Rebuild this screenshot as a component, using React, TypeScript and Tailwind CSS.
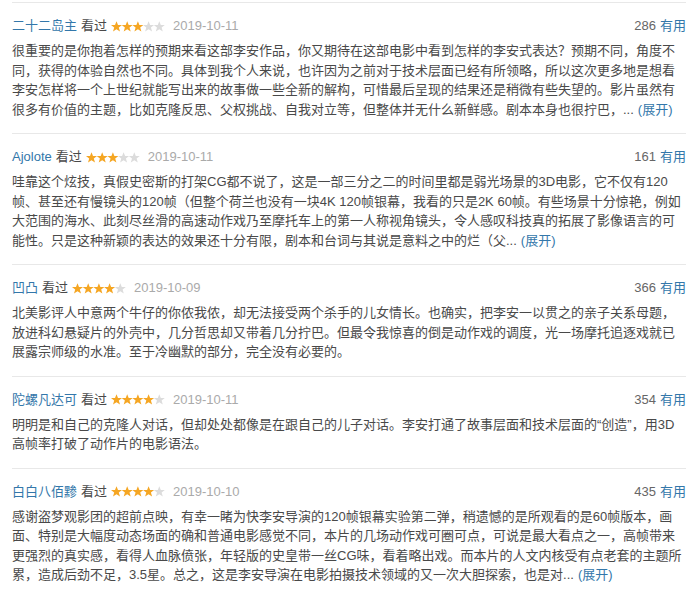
import React from "react";

type Review = {
  user: string;
  stars: number;
  date: string;
  votes: number;
  text: string;
  more: boolean;
};

const reviews: Review[] = [
  {
    user: "二十二岛主",
    stars: 3,
    date: "2019-10-11",
    votes: 286,
    text:
      "很重要的是你抱着怎样的预期来看这部李安作品，你又期待在这部电影中看到怎样的李安式表达？预期不同，角度不同，获得的体验自然也不同。具体到我个人来说，也许因为之前对于技术层面已经有所领略，所以这次更多地是想看李安怎样将一个上世纪就能写出来的故事做一些全新的解构，可惜最后呈现的结果还是稍微有些失望的。影片虽然有很多有价值的主题，比如克隆反思、父权挑战、自我对立等，但整体并无什么新鲜感。剧本本身也很拧巴，...",
    more: true,
  },
  {
    user: "Ajolote",
    stars: 3,
    date: "2019-10-11",
    votes: 161,
    text:
      "哇靠这个炫技，真假史密斯的打架CG都不说了，这是一部三分之二的时间里都是弱光场景的3D电影，它不仅有120帧、甚至还有慢镜头的120帧（但整个荷兰也没有一块4K 120帧银幕，我看的只是2K 60帧。有些场景十分惊艳，例如大范围的海水、此刻尽丝滑的高速动作戏乃至摩托车上的第一人称视角镜头，令人感叹科技真的拓展了影像语言的可能性。只是这种新颖的表达的效果还十分有限，剧本和台词与其说是意料之中的烂（父...",
    more: true,
  },
  {
    user: "凹凸",
    stars: 4,
    date: "2019-10-09",
    votes: 366,
    text:
      "北美影评人中意两个牛仔的你侬我侬，却无法接受两个杀手的儿女情长。也确实，把李安一以贯之的亲子关系母题，放进科幻悬疑片的外壳中，几分哲思却又带着几分拧巴。但最令我惊喜的倒是动作戏的调度，光一场摩托追逐戏就已展露宗师级的水准。至于冷幽默的部分，完全没有必要的。",
    more: false,
  },
  {
    user: "陀螺凡达可",
    stars: 4,
    date: "2019-10-11",
    votes: 354,
    text:
      "明明是和自己的克隆人对话，但却处处都像是在跟自己的儿子对话。李安打通了故事层面和技术层面的“创造”，用3D高帧率打破了动作片的电影语法。",
    more: false,
  },
  {
    user: "白白八佰黪",
    stars: 4,
    date: "2019-10-10",
    votes: 435,
    text:
      "感谢盗梦观影团的超前点映，有幸一睹为快李安导演的120帧银幕实验第二弹，稍遗憾的是所观看的是60帧版本，画面、特别是大幅度动态场面的确和普通电影感觉不同，本片的几场动作戏可圈可点，可说是最大看点之一，高帧带来更强烈的真实感，看得人血脉偾张，年轻版的史皇带一丝CG味，看着略出戏。而本片的人文内核受有点老套的主题所累，造成后劲不足，3.5星。总之，这是李安导演在电影拍摄技术领域的又一次大胆探索，也是对...",
    more: true,
  },
];

function Stars({ n }: { n: number }) {
  const star =
    "M5.5 0.2 L7 4 L11 4.1 L7.8 6.6 L9 10.6 L5.5 8.2 L2 10.6 L3.2 6.6 L0 4.1 L4 4 Z";
  return (
    <svg width="55" height="11" viewBox="0 0 55 11" className="block">
      {[0, 1, 2, 3, 4].map((i) => (
        <path
          key={i}
          d={star}
          transform={`translate(${i * 10.7} 0)`}
          fill={i < n ? "#f5a623" : "#dcdcdc"}
        />
      ))}
    </svg>
  );
}

export default function App() {
  return (
    <div
      className="w-[698px] bg-white px-[12px] pt-[2px] text-[13px] text-[#494949]"
      style={{ fontFamily: '"Liberation Sans", Arial, "Noto Sans CJK SC", sans-serif' }}
    >
      {reviews.map((r, idx) => (
        <div key={idx} className="border-t border-[#e8e8e8] pt-[13px] pb-[14px]">
          <div className="flex h-[20px] items-center justify-between leading-[20px]">
            <div className="flex items-center">
              <span className="text-[#3377aa]">{r.user}</span>
              <span className="ml-[4px]">看过</span>
              <span className="ml-[4px] flex items-center">
                <Stars n={r.stars} />
              </span>
              <span className="ml-[7px] text-[#aaaaaa]">{r.date}</span>
            </div>
            <div className="flex items-center">
              <span className="text-[#666666]">{r.votes}</span>
              <span className="ml-[4px] text-[#3377aa]">有用</span>
            </div>
          </div>
          <p className="mt-[5px] leading-[19.5px]">
            <span>{r.text}</span>
            {r.more && <span className="ml-[4px] text-[#3377aa]">(展开)</span>}
          </p>
        </div>
      ))}
    </div>
  );
}
